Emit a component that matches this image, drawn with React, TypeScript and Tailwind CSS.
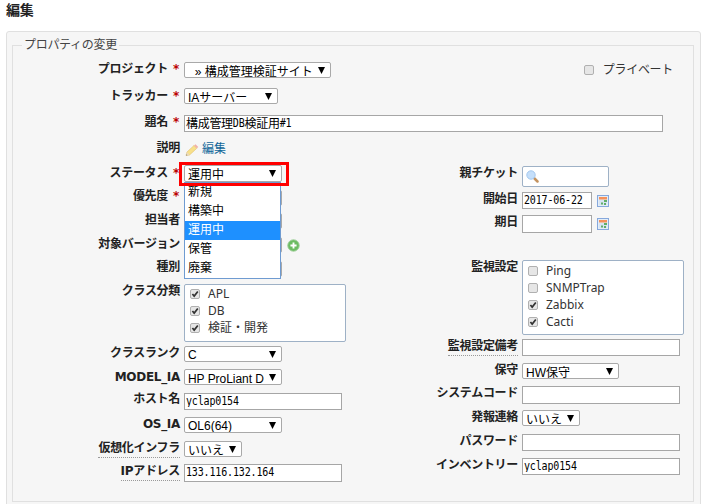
import type { ReactNode } from 'react';

const jp = "font-['Noto_Sans','Noto_Sans_CJK_JP',sans-serif]";
const arial = "font-['Liberation_Sans','Noto_Sans_CJK_JP',sans-serif]";

function Row({ label, required, hint, h, labelW = 'w-[167px]', children }: {
  label: string; required?: boolean; hint?: boolean; h: string; labelW?: string; children?: ReactNode;
}) {
  return (
    <div className={`flex items-start gap-1 ${h}`}>
      <div className={`flex shrink-0 justify-end whitespace-nowrap font-['DejaVu_Sans','Noto_Sans_CJK_JP',sans-serif] font-bold leading-[17px] text-[#222] ${labelW}`}>
        <span className={`tracking-[-0.3px] ${hint ? 'h-[18px] border-b border-dotted border-[#999]' : 'h-4'}`}>{label}</span>
        {required && <span className="w-3 pl-[5px] text-[#bb0000]">*</span>}
      </div>
      {children}
    </div>
  );
}

function Select({ children, className = '' }: { children?: ReactNode; className?: string }) {
  return (
    <div className={`flex h-4 shrink-0 overflow-hidden rounded-[2px] border border-[#a9a9a9] bg-white pl-[3px] text-black ${arial} ${className}`}>
      <span className="min-w-0 flex-1 overflow-hidden whitespace-pre leading-[17px]">{children}</span>
      <svg viewBox="0 0 7 7" className="mr-[5px] mt-[4px] h-[7px] w-[7px] shrink-0"><path d="M0 0h7L3.5 7z" /></svg>
    </div>
  );
}

function Input({ children, className = '' }: { children?: ReactNode; className?: string }) {
  return (
    <div className={`shrink-0 overflow-hidden whitespace-nowrap border border-[#a6a6a6] bg-white pl-px leading-[15px] text-black ${className}`}>
      {children}
    </div>
  );
}

function Mono({ children }: { children: ReactNode }) {
  return <span className="-mt-px inline-block origin-center scale-y-[1.15] align-top font-['DejaVu_Sans_Mono',monospace] text-[10px] tracking-[-0.15px]">{children}</span>;
}

function Check({ on }: { on?: boolean }) {
  return (
    <svg viewBox="0 0 10 10" className="h-[10px] w-[10px] shrink-0">
      <rect x=".5" y=".5" width="9" height="9" rx="1.5" fill="#e6e6e6" stroke="#b0b0b0" />
      {on && <path d="M2.4 5l1.8 2.1L7.8 2.4" fill="none" stroke="#333" strokeWidth="1.7" />}
    </svg>
  );
}

function CheckList({ items, className }: { items: [string, boolean][]; className: string }) {
  return (
    <div className={`w-[162px] shrink-0 rounded-[2px] border border-[#9eb1c6] bg-white pl-[5px] ${className}`}>
      {items.map(([name, on]) => (
        <div key={name} className="flex h-[17px] items-center gap-2 leading-[17px] text-[#333]">
          <Check on={on} />
          <span>{name}</span>
        </div>
      ))}
    </div>
  );
}

function Calendar() {
  return (
    <svg viewBox="0 0 12 12" className="ml-px mt-[4px] h-3 w-3 shrink-0">
      <rect x=".5" y=".5" width="11" height="11" fill="#e3edf8" stroke="#86a8dc" />
      <path d="M2 2h8v2.500H2z" fill="#f5915a" />
      <path d="M2 5h8v5H2z" fill="#d6e4f3" />
      <path d="M7 5h3v2H7zM4 7.500h2v2H4zM7 8h2v2H7z" fill="#5fae68" />
    </svg>
  );
}

function StatusList() {
  return (
    <div className={`absolute left-0 top-[17px] z-10 h-[97px] w-[97px] border border-[#6f9bd1] bg-white text-black ${arial}`}>
      {['新規', '構築中', '運用中', '保管', '廃棄'].map((s) => (
        <div key={s} className={`h-[19px] pl-[3px] leading-[18px] ${s === '運用中' ? 'bg-[#1e90ff] text-white' : ''}`}>{s}</div>
      ))}
    </div>
  );
}

export default function App() {
  const rl = 'w-[178px]';
  return (
    <div className={`h-[504px] w-[708px] overflow-hidden bg-white pl-[6px] text-[12px] text-[#333] ${jp}`}>
      <h2 className="h-[31px] text-[14px] font-bold leading-[19px] tracking-[-0.3px] text-[#222]">編集</h2>
      <div className="h-[490px] w-[695px] rounded-[3px] border border-[#e0e0e0] bg-[#f6f6f6] pl-[5px] pt-[5px]">
        <fieldset className="h-[465px] w-[682px] border border-[#e0e0e0]">
          <legend className="ml-[9px] h-4 px-[2px] leading-4 tracking-[-0.3px] text-[#444]">プロパティの変更</legend>
          <div className="pt-2">
            <Row label="プロジェクト" required h="h-[27px]">
              <Select className="mt-px w-[147px]"><span className="inline-block pt-px">{'  » 構成管理検証サイト'}</span></Select>
              <div className="ml-auto mr-[20px] flex items-center gap-[9px] leading-[17px]">
                <Check /><span className="tracking-[-0.3px]">プライベート</span>
              </div>
            </Row>
            <Row label="トラッカー" required h="h-[26px]">
              <Select className="w-[94px]"><span className="inline-block pt-px">IAサーバー</span></Select>
            </Row>
            <Row label="題名" required h="h-[26px]">
              <Input className="mt-px h-[17px] w-[479px] tracking-[-0.3px]">
                <span>構成管理</span><Mono>DB</Mono><span>検証用</span><Mono>#1</Mono>
              </Input>
            </Row>
            <Row label="説明" h="h-[25px]">
              <div className="flex items-start gap-1">
                <svg viewBox="0 0 14 14" className="ml-px mr-[-1px] mt-[3px] h-[14px] w-[14px]">
                  <path d="M1 12.500l1-3.500 7-6.500 2.800 2.800-7.300 6.700z" fill="#f8e08a" stroke="#e0c06a" strokeWidth=".6" />
                  <path d="M9 2.500l1.500-1.300 2.800 2.800-1.500 1.300z" fill="#f0b0a8" />
                  <path d="M1 12.500l1-3.500 2.500 3z" fill="#ead9bd" /><path d="M1 12.500l.4-1.300 1 1z" fill="#777" />
                </svg>
                <span className="leading-[17px] text-[#116699]">編集</span>
              </div>
            </Row>
            <div className="flex">
              <div className="w-[327px]">
                <Row label="ステータス" required h="h-[23px]">
                  <div className="relative">
                    <Select className="h-[17px] w-[98px] border-[#6f9bd1]"><span className="inline-block pt-px">運用中</span></Select>
                    <StatusList />
                    <div className="absolute left-[-5px] top-[-3px] z-20 h-[24px] w-[110px] border-[3px] border-[#ff0000]" />
                  </div>
                </Row>
                <Row label="優先度" required h="h-[24px]"><Select className="mt-[2px] w-[98px]" /></Row>
                <Row label="担当者" h="h-[24px]"><Select className="mt-px w-[98px]" /></Row>
                <Row label="対象バージョン" h="h-[23px]">
                  <Select className="mt-px w-[98px]" />
                  <svg viewBox="0 0 14 14" className="ml-px mt-[3px] h-[13px] w-[13px]">
                    <circle cx="7" cy="7" r="6.200" fill="#6cbc62" stroke="#a2cf9d" />
                    <path d="M7 3.700v6.600M3.700 7h6.600" stroke="#fff" strokeWidth="2" />
                  </svg>
                </Row>
                <Row label="種別" h="h-[24px]"><Select className="mt-[2px] w-[98px]" /></Row>
                <Row label="クラス分類" h="h-[62px]">
                  <CheckList className="mt-px h-[58px]" items={[['APL', true], ['DB', true], ['検証・開発', true]]} />
                </Row>
                <Row label="クラスランク" h="h-[24px]"><Select className="mt-px w-[98px]">C</Select></Row>
                <Row label="MODEL_IA" h="h-[22px]"><Select className="w-[98px]"><span className="inline-block pt-px tracking-[-0.05px]">HP ProLiant D</span></Select></Row>
                <Row label="ホスト名" h="h-[25px]"><Input className="mt-[2px] h-[17px] w-[158px]"><Mono>yclap0154</Mono></Input></Row>
                <Row label="OS_IA" h="h-[24px]"><Select className="mt-px w-[98px]">OL6(64)</Select></Row>
                <Row label="仮想化インフラ" hint h="h-[23px]"><Select className="mt-px w-[58px]"><span className="inline-block pt-px">いいえ</span></Select></Row>
                <Row label="IPアドレス" hint h="h-[24px]"><Input className="mt-px h-[18px] w-[158px]"><Mono>133.116.132.164</Mono></Input></Row>
              </div>
              <div>
                <Row labelW={rl} label="親チケット" h="h-[26px]">
                  <div className="mt-px h-[21px] w-[87px] rounded-[2px] border border-[#9eb1c6] bg-white pl-[3px] pt-[3px]">
                    <svg viewBox="0 0 13 13" className="h-[13px] w-[13px]">
                      <path d="M8 8l3.500 3.500" stroke="#c4935f" strokeWidth="2.500" strokeLinecap="round" />
                      <circle cx="5" cy="5" r="4.200" fill="#c5dffa" stroke="#a5c8ee" />
                    </svg>
                  </div>
                </Row>
                <Row labelW={rl} label="開始日" h="h-[23px]">
                  <Input className="mt-px h-[17px] w-[70px]"><Mono>2017-06-22</Mono></Input><Calendar />
                </Row>
                <Row labelW={rl} label="期日" h="h-[45px]"><Input className="mt-px h-[18px] w-[70px]" /><Calendar /></Row>
                <Row labelW={rl} label="監視設定" h="h-[79px]">
                  <CheckList className="mt-px h-[75px] pt-px" items={[['Ping', false], ['SNMPTrap', false], ['Zabbix', true], ['Cacti', true]]} />
                </Row>
                <Row labelW={rl} label="監視設定備考" hint h="h-[24px]"><Input className="mt-px h-[17px] w-[158px]" /></Row>
                <Row labelW={rl} label="保守" h="h-[23px]"><Select className="mt-px w-[97px]"><span className="inline-block pt-px">HW保守</span></Select></Row>
                <Row labelW={rl} label="システムコード" h="h-[24px]"><Input className="mt-px h-[18px] w-[158px]" /></Row>
                <Row labelW={rl} label="発報連絡" h="h-[24px]"><Select className="mt-px w-[58px]"><span className="inline-block pt-px">いいえ</span></Select></Row>
                <Row labelW={rl} label="パスワード" h="h-[24px]"><Input className="mt-px h-[17px] w-[158px]" /></Row>
                <Row labelW={rl} label="インベントリー" h="h-[24px]"><Input className="mt-px h-[17px] w-[158px]"><Mono>yclap0154</Mono></Input></Row>
              </div>
            </div>
          </div>
        </fieldset>
      </div>
    </div>
  );
}
